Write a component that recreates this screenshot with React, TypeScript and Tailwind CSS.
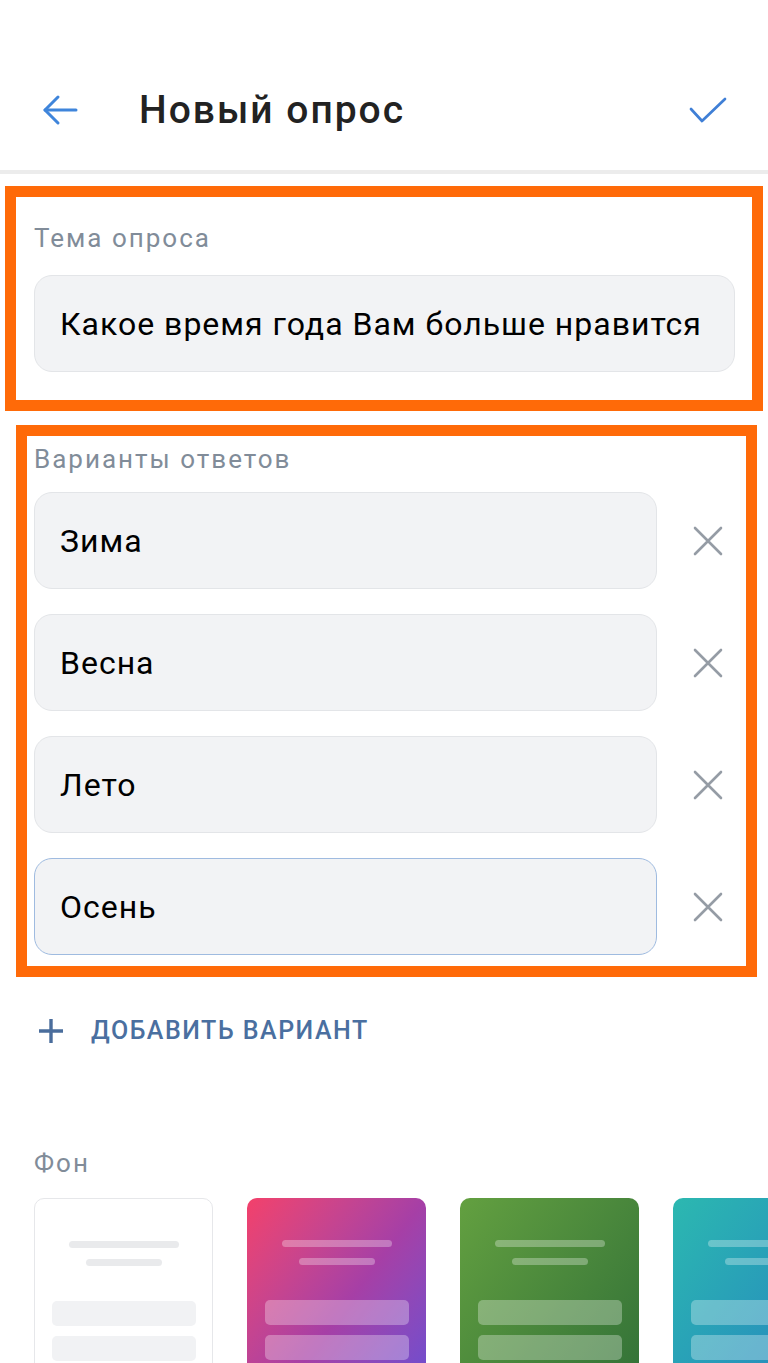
const font = { fontFamily: 'Roboto, "Noto Sans", sans-serif' }

const answers = ['Зима', 'Весна', 'Лето', 'Осень']

function BackIcon() {
  return (
    <svg width="36" height="32" viewBox="0 0 36 32" fill="none" stroke="#3f85db" strokeWidth="3" strokeLinecap="round" strokeLinejoin="round">
      <path d="M34 16H3" />
      <path d="M16 3L3 16l13 13" />
    </svg>
  )
}

function CheckIcon() {
  return (
    <svg width="40" height="28" viewBox="0 0 40 28" fill="none" stroke="#3f7fd6" strokeWidth="2.7" strokeLinecap="round" strokeLinejoin="round">
      <path d="M3 13l11 12L37 3" />
    </svg>
  )
}

function CloseIcon() {
  return (
    <svg width="30" height="30" viewBox="0 0 30 30" fill="none" stroke="#959ca5" strokeWidth="2.6" strokeLinecap="round">
      <path d="M2 2l26 26M28 2L2 28" />
    </svg>
  )
}

function PlusIcon() {
  return (
    <svg width="26" height="26" viewBox="0 0 26 26" fill="none" stroke="#4a6d9c" strokeWidth="3.4">
      <path d="M13 1v24M1 13h24" />
    </svg>
  )
}

function Card({ tone }: { tone: 'white' | 'pink' | 'green' | 'teal' }) {
  const bg =
    tone === 'white'
      ? 'bg-white border border-[#e6e7ea]'
      : tone === 'pink'
        ? 'bg-gradient-to-br from-[#f3406a] via-[#a63fa6] to-[#5a4ddc]'
        : tone === 'green'
          ? 'bg-gradient-to-br from-[#63a040] to-[#2c6c36]'
          : 'bg-gradient-to-br from-[#2cb8b0] to-[#2a78c0]'
  const line = tone === 'white' ? 'bg-[#e9eaec]' : 'bg-white/30'
  const block = tone === 'white' ? 'bg-[#f1f2f4]' : 'bg-white/30'
  return (
    <div className={`flex h-[240px] w-[179px] shrink-0 flex-col items-center rounded-[10px] pt-[42px] ${bg}`}>
      <div className={`h-[7px] w-[110px] rounded-full ${line}`} />
      <div className={`mt-[11px] h-[7px] w-[76px] rounded-full ${line}`} />
      <div className={`mt-[35px] h-[25px] w-[144px] rounded-[5px] ${block}`} />
      <div className={`mt-[10px] h-[25px] w-[144px] rounded-[5px] ${block}`} />
    </div>
  )
}

export default function App() {
  return (
    <div className="h-[1363px] w-[768px] overflow-hidden bg-white" style={font}>
      <header className="flex h-[100px] items-center pl-[42px] pr-[40px] mt-[60px]">
        <BackIcon />
        <h1 className="ml-[61px] flex-1 text-[39px] font-medium leading-none tracking-[2px] text-[#222]">Новый опрос</h1>
        <CheckIcon />
      </header>
      <div className="mt-[10px] h-[4px] bg-[#ececec]" />

      <section className="mx-[5px] mt-[12px] border-[11px] border-[#ff6a08] pl-[18px] pr-[17px] pt-[26px] pb-[28px]">
        <p className="text-[26px] leading-[31px] tracking-[2px] text-[#818c99]">Тема опроса</p>
        <div className="mt-[21px] flex h-[97px] items-center rounded-[18px] border border-[#e3e5e8] bg-[#f2f3f5] px-[25px] text-[32px] tracking-[1px] text-black">
          Какое время года Вам больше нравится
        </div>
      </section>

      <section className="ml-[16px] mr-[11px] mt-[14px] border-[11px] border-[#ff6a08] pl-[7px] pt-[8px] pb-[11px]">
        <p className="text-[26px] leading-[31px] tracking-[2px] text-[#818c99]">Варианты ответов</p>
        <div className="mt-[17px] flex flex-col gap-[25px]">
          {answers.map((a, i) => (
            <div key={a} className="flex items-center">
              <div
                className={`flex h-[97px] w-[623px] items-center rounded-[18px] border bg-[#f2f3f5] px-[25px] text-[32px] tracking-[1px] text-black ${
                  i === 3 ? 'border-[#9fbbe0]' : 'border-[#e3e5e8]'
                }`}
              >
                {a}
              </div>
              <div className="ml-[36px]">
                <CloseIcon />
              </div>
            </div>
          ))}
        </div>
      </section>

      <div className="ml-[38px] mt-[34px] flex h-[40px] items-center">
        <PlusIcon />
        <span className="ml-[27px] text-[25px] font-medium uppercase tracking-[1.5px] text-[#4a6fa0]">Добавить вариант</span>
      </div>

      <p className="ml-[34px] mt-[97px] text-[26px] leading-[31px] tracking-[2px] text-[#818c99]">Фон</p>
      <div className="mt-[19px] flex gap-[34px] pl-[34px]">
        <Card tone="white" />
        <Card tone="pink" />
        <Card tone="green" />
        <Card tone="teal" />
      </div>
    </div>
  )
}
